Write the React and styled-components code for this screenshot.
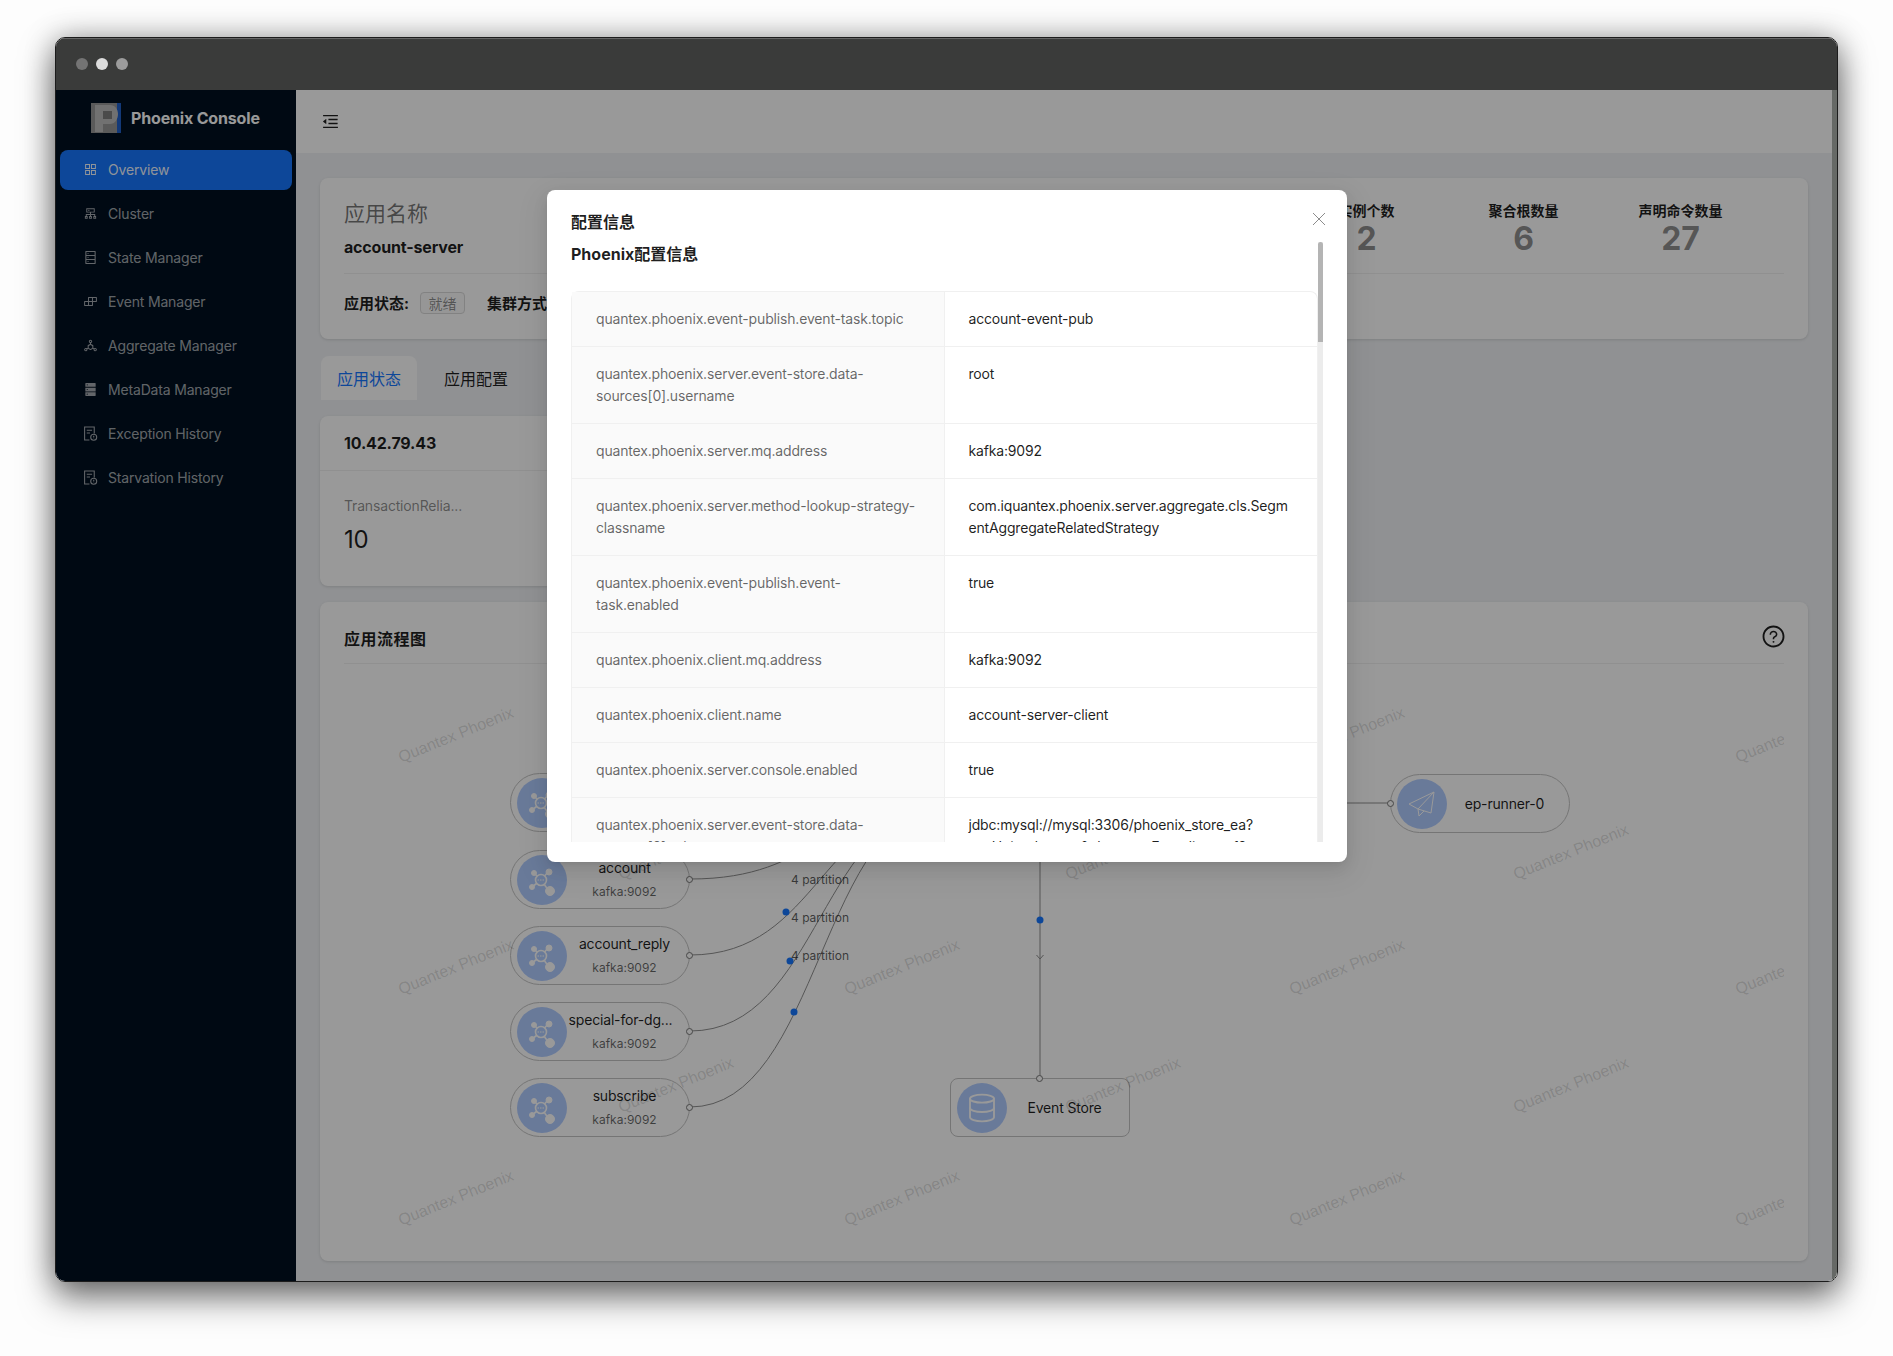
import React from 'react';
import styled, { createGlobalStyle } from 'styled-components';
import {
  AiOutlineAppstore,
  AiOutlineCluster,
  AiOutlineDatabase,
  AiOutlineBuild,
  AiOutlineDeploymentUnit,
  AiFillDatabase,
  AiOutlineMenuFold,
  AiOutlineQuestionCircle,
} from 'react-icons/ai';
import { Database } from 'lucide-react';

const GlobalStyle = createGlobalStyle`
  html, body {
    margin: 0;
    width: 1893px;
    height: 1356px;
    overflow: hidden;
    background: #fdfdfd;
    font-family: Inter, "Noto Sans CJK SC", sans-serif;
    letter-spacing: -0.17px;
    color: rgba(0, 0, 0, 0.88);
  }
  * {
    box-sizing: border-box;
  }
`;

const Page = styled.div`
  padding: 37px 55px 74px;
  height: 1356px;
`;

const Window = styled.div`
  height: 100%;
  display: flex;
  flex-direction: column;
  border-radius: 10px;
  overflow: hidden;
  border: 1px solid #1c1c1c;
  box-shadow: 0 16px 34px rgba(0, 0, 0, 0.5), 0 0 30px rgba(0, 0, 0, 0.3);
`;

const TitleBar = styled.div`
  height: 52px;
  flex-shrink: 0;
  display: flex;
  align-items: center;
  gap: 8px;
  padding: 0 0 2px 20px;
  background: #3a3b3a;
  border-top: 1px solid #666;
`;

const Light = styled.span`
  width: 12px;
  height: 12px;
  border-radius: 50%;
  background: ${(p) => p.$tone};
`;

const Body = styled.div`
  flex: 1;
  min-height: 0;
  display: flex;
  position: relative;
  background: #f0f2f5;
`;

const Sider = styled.aside`
  width: 240px;
  flex-shrink: 0;
  background: #000f20;
`;

const Brand = styled.div`
  height: 56px;
  margin-bottom: 4px;
  display: flex;
  align-items: center;
  gap: 10px;
  padding-left: 35px;
  color: #fff;
  font-size: 16px;
  font-weight: 700;
`;

const MenuList = styled.nav`
  display: flex;
  flex-direction: column;
  gap: 4px;
  padding: 0 4px;
`;

const MenuItem = styled.div`
  height: 40px;
  display: flex;
  align-items: center;
  gap: 10px;
  padding: 0 0 1px 23px;
  border-radius: 8px;
  font-size: 14px;
  color: ${(p) => (p.$active ? 'rgba(255,255,255,0.95)' : 'rgba(255,255,255,0.65)')};
  background: ${(p) => (p.$active ? '#1677ff' : 'transparent')};

  svg {
    width: 15px;
    height: 15px;
    flex-shrink: 0;
  }
`;

const Main = styled.main`
  flex: 1;
  min-width: 0;
  display: flex;
  flex-direction: column;
`;

const EdgeStrip = styled.div`
  width: 5px;
  flex-shrink: 0;
  background: #aab0aa;
`;

const Header = styled.header`
  height: 63px;
  flex-shrink: 0;
  display: flex;
  align-items: center;
  padding-left: 25px;
  background: #fff;
  font-size: 19px;
`;

const Content = styled.div`
  padding: 25px 24px 0;
`;

const Card = styled.section`
  background: #fff;
  border-radius: 8px;
  box-shadow: 0 1px 3px rgba(0, 0, 0, 0.12);
`;

const SummaryCard = styled(Card)`
  height: 161px;
  padding: 0 24px;
`;

const SummaryTop = styled.div`
  height: 96px;
  display: flex;
  justify-content: space-between;
  border-bottom: 1px solid #f0f0f0;
`;

const NameBlock = styled.div`
  padding-top: 20px;
`;

const AppLabel = styled.div`
  font-size: 21px;
  line-height: 32px;
  letter-spacing: 0;
  color: rgba(0, 0, 0, 0.55);
`;

const AppName = styled.div`
  margin-top: 5px;
  font-size: 16px;
  line-height: 24px;
  font-weight: 700;
`;

const Stats = styled.div`
  display: flex;
  padding: 22px 25px 0 0;
`;

const Stat = styled.div`
  width: 157px;
  text-align: center;
`;

const StatLabel = styled.div`
  font-size: 14px;
  line-height: 22px;
  letter-spacing: 0;
  font-weight: 700;
`;

const StatValue = styled.div`
  font-size: 32px;
  line-height: 34px;
  font-weight: 700;
  color: rgba(0, 0, 0, 0.45);
`;

const MetaRow = styled.div`
  margin-top: 18px;
  height: 21px;
  display: flex;
  align-items: center;
  font-size: 15px;
  letter-spacing: 0;
  font-weight: 700;
`;

const Tag = styled.span`
  width: 45px;
  height: 22px;
  margin: 0 22px 0 11px;
  display: flex;
  align-items: center;
  justify-content: center;
  font-size: 14px;
  font-weight: 400;
  color: rgba(0, 0, 0, 0.45);
  background: #fafafa;
  border: 1px solid #d9d9d9;
  border-radius: 4px;
`;

const Tabs = styled.div`
  margin: 17px 0 16px 1px;
  height: 44px;
  display: flex;
  gap: 11px;
`;

const Tab = styled.div`
  padding: 0 16px 1px;
  display: flex;
  align-items: center;
  font-size: 16px;
  letter-spacing: 0;
  border-radius: 8px 8px 0 0;
  color: ${(p) => (p.$active ? '#1677ff' : 'rgba(0,0,0,0.88)')};
  background: ${(p) => (p.$active ? '#fff' : 'transparent')};
`;

const InstanceCard = styled(Card)`
  width: 800px;
  height: 170px;
`;

const InstanceHead = styled.div`
  height: 55px;
  padding: 0 24px;
  display: flex;
  align-items: center;
  font-size: 16px;
  font-weight: 700;
  border-bottom: 1px solid #f0f0f0;
`;

const MetricBlock = styled.div`
  padding: 24px 24px 0;
`;

const MetricName = styled.div`
  font-size: 14px;
  line-height: 22px;
  color: rgba(0, 0, 0, 0.45);
`;

const MetricValue = styled.div`
  margin-top: 7px;
  font-size: 24px;
  line-height: 32px;
`;

const FlowCard = styled(Card)`
  margin-top: 16px;
  height: 659px;
  display: flex;
  flex-direction: column;
`;

const FlowHead = styled.div`
  height: 62px;
  margin: 0 24px;
  flex-shrink: 0;
  display: flex;
  align-items: center;
  justify-content: space-between;
  font-size: 16px;
  letter-spacing: 0.5px;
  font-weight: 700;
  border-bottom: 1px solid #f0f0f0;
  padding-top: 10px;

  svg {
    width: 25px;
    height: 25px;
    margin: -2px -2px 0 0;
  }
`;

const Canvas = styled.div`
  position: relative;
  flex: 1;
  margin: 0 24px;
  overflow: hidden;
`;

const EdgeLayer = styled.svg`
  position: absolute;
  inset: 0;
  width: 100%;
  height: 100%;
`;

const Node = styled.div`
  position: absolute;
  left: ${(p) => p.$x}px;
  top: ${(p) => p.$y}px;
  width: 180px;
  height: 59px;
  display: flex;
  align-items: center;
  padding-left: 6px;
  background: #fff;
  border: 1px solid #c4c4c4;
  border-radius: ${(p) => (p.$square ? '8px' : '30px')};
`;

const NodeIcon = styled.div`
  width: 50px;
  height: 50px;
  flex-shrink: 0;
  display: flex;
  align-items: center;
  justify-content: center;
  border-radius: 50%;
  background: #b0ccff;
  color: #fff;
`;

const NodeText = styled.div`
  width: 115px;
  text-align: center;
  white-space: nowrap;
`;

const NodeName = styled.div`
  font-size: 14px;
  line-height: 23px;
  margin-right: ${(p) => (p.$nudged ? '8px' : '0')};
`;

const NodeSub = styled.div`
  font-size: 12px;
  line-height: 25px;
  letter-spacing: 0;
  color: rgba(0, 0, 0, 0.6);
`;

const Handle = styled.span`
  position: absolute;
  width: 7px;
  height: 7px;
  border-radius: 50%;
  background: #fff;
  border: 1px solid #777;
  ${(p) => p.$side === 'right' && 'right: -4px; top: 25px;'}
  ${(p) => p.$side === 'left' && 'left: -4px; top: 25px;'}
  ${(p) => p.$side === 'top' && 'left: 85px; top: -4px;'}
`;

const EdgeLabel = styled.div`
  position: absolute;
  left: ${(p) => p.$x}px;
  top: ${(p) => p.$y}px;
  transform: translate(-50%, -50%);
  font-size: 12px;
  letter-spacing: 0;
  white-space: nowrap;
  color: rgba(0, 0, 0, 0.65);
`;

const Watermark = styled.div`
  position: absolute;
  left: ${(p) => p.$x}px;
  top: ${(p) => p.$y}px;
  transform: translate(-50%, -50%) rotate(-22deg);
  font-family: "Liberation Sans", sans-serif;
  font-size: 16px;
  letter-spacing: 0;
  white-space: nowrap;
  color: rgba(0, 0, 0, 0.14);
  pointer-events: none;
`;

const Mask = styled.div`
  position: absolute;
  inset: 0;
  background: rgba(0, 0, 0, 0.4);
`;

const Modal = styled.div`
  position: absolute;
  left: 491px;
  top: 100px;
  width: 800px;
  height: 672px;
  padding: 20px 24px;
  display: flex;
  flex-direction: column;
  background: #fff;
  border-radius: 8px;
  box-shadow: 0 6px 16px rgba(0, 0, 0, 0.08), 0 3px 6px -4px rgba(0, 0, 0, 0.12),
    0 9px 28px 8px rgba(0, 0, 0, 0.05);
`;

const ModalTitle = styled.div`
  font-size: 16px;
  line-height: 24px;
  letter-spacing: 0;
  font-weight: 700;
  height: 32px;
  flex-shrink: 0;
`;

const CloseButton = styled.div`
  position: absolute;
  right: 21px;
  top: 20px;
  width: 14px;
  height: 14px;
  color: #8c8c8c;
`;

const ModalScroll = styled.div`
  position: relative;
  height: 600px;
  flex-shrink: 0;
  overflow: hidden;
`;

const ScrollTrack = styled.div`
  position: absolute;
  right: 0;
  top: 0;
  bottom: 0;
  width: 5px;
  background: #ececec;
`;

const ScrollThumb = styled.div`
  height: 100px;
  background: #b4b4b4;
  border-radius: 3px 3px 0 0;
`;

const SectionTitle = styled.div`
  font-size: 16px;
  line-height: 24px;
  letter-spacing: 0;
  font-weight: 700;
  margin-bottom: 25px;
`;

const ConfigTable = styled.table`
  width: 747px;
  table-layout: fixed;
  border-collapse: separate;
  border-spacing: 0;
  border: 1px solid #f0f0f0;
  border-bottom: 0;
  border-radius: 8px 8px 0 0;
  font-size: 14px;
  line-height: 22px;

  td {
    padding: 16px 24px;
    vertical-align: top;
    border-bottom: 1px solid #f0f0f0;
    overflow-wrap: anywhere;
  }
`;

const KeyCell = styled.td`
  color: rgba(0, 0, 0, 0.6);
  background: #fafafa;
  border-right: 1px solid #f0f0f0;
`;

const ValueCell = styled.td`
  color: rgba(0, 0, 0, 0.88);
`;

const menu = [
  { label: 'Overview', icon: <AiOutlineAppstore />, active: true },
  { label: 'Cluster', icon: <AiOutlineCluster /> },
  { label: 'State Manager', icon: <AiOutlineDatabase /> },
  { label: 'Event Manager', icon: <AiOutlineBuild /> },
  { label: 'Aggregate Manager', icon: <AiOutlineDeploymentUnit /> },
  { label: 'MetaData Manager', icon: <AiFillDatabase /> },
  { label: 'Exception History', icon: <HistoryIcon /> },
  { label: 'Starvation History', icon: <HistoryIcon /> },
];

const config = [
  ['quantex.phoenix.event-publish.event-task.topic', 'account-event-pub'],
  ['quantex.phoenix.server.event-store.data-sources[0].username', 'root'],
  ['quantex.phoenix.server.mq.address', 'kafka:9092'],
  ['quantex.phoenix.server.method-lookup-strategy-classname', 'com.iquantex.phoenix.server.aggregate.cls.SegmentAggregateRelatedStrategy'],
  ['quantex.phoenix.event-publish.event-task.enabled', 'true'],
  ['quantex.phoenix.client.mq.address', 'kafka:9092'],
  ['quantex.phoenix.client.name', 'account-server-client'],
  ['quantex.phoenix.server.console.enabled', 'true'],
  ['quantex.phoenix.server.event-store.data-sources[0].url', 'jdbc:mysql://mysql:3306/phoenix_store_ea?useUnicode=true&characterEncoding=utf8'],
];

const topics = [
  { name: 'account-event', y: 109 },
  { name: 'account', y: 186 },
  { name: 'account_reply', y: 262 },
  { name: 'special-for-dg...', y: 338, nudged: true },
  { name: 'subscribe', y: 414 },
];

const watermarks = [
  [112, 71], [558, 71], [1003, 71], [1449, 71],
  [112, 303], [558, 303], [1003, 303], [1449, 303],
  [112, 534], [558, 534], [1003, 534], [1449, 534],
  [332, 188], [779, 188], [1227, 188],
  [332, 421], [779, 421], [1227, 421],
];

function HistoryIcon() {
  return (
    <svg viewBox="0 0 14 14" fill="none" stroke="currentColor" strokeWidth="1">
      <path d="M6 13H1.500V1h9v6" />
      <path d="M3.500 4h5M3.500 6.500h3" />
      <circle cx="10" cy="10.500" r="2.800" />
      <path d="M10 9v1.800M10 11.600v.4" />
    </svg>
  );
}

function CloseIcon() {
  return (
    <svg width="14" height="14" viewBox="0 0 14 14" fill="none" stroke="currentColor" strokeWidth="1">
      <path d="M1 1l12 12M13 1L1 13" />
    </svg>
  );
}

function Logo() {
  return (
    <svg width="30" height="30" viewBox="0 0 30 30">
      <rect width="30" height="30" fill="#969696" />
      <rect x="26" width="4" height="30" fill="#2060c8" />
      <path d="M4 2h15c5 0 8 4 8 9s-3 10-8 10h-7v8H4z" fill="#bcbcbc" />
      <rect x="12" y="8" width="9" height="8" fill="#7d7d7d" />
    </svg>
  );
}

function TopicIcon() {
  return (
    <svg width="32" height="32" viewBox="0 0 32 32" fill="#fff" stroke="#fff">
      <path d="M15 16L8 9M15 16L22 8M15 16L6 23M15 16L23 27" strokeWidth="1.600" />
      <circle cx="8" cy="9" r="2.500" />
      <circle cx="23" cy="8" r="3" />
      <circle cx="6" cy="23" r="2.500" />
      <circle cx="24" cy="27" r="4.500" />
      <circle cx="15" cy="16" r="5.500" fill="#b0ccff" strokeWidth="1.600" />
      <path d="M11.500 16h7" strokeWidth="1.200" strokeDasharray="1.500 1" />
    </svg>
  );
}

function PlaneIcon() {
  return (
    <svg width="30" height="30" viewBox="0 0 30 30" fill="none" stroke="#fff" strokeWidth="1">
      <path d="M27 3L2 15l9 5 13 4zM27 3L11 20l1 7 5-5" />
    </svg>
  );
}

function curve(y) {
  return `M346 ${y}C476.500 ${y} 476.500 139 607 139`;
}

function FlowDiagram() {
  return (
    <Canvas>
      <EdgeLayer>
        <g fill="none" stroke="#8f8f8f" strokeWidth="1">
          {topics.map((t) => (
            <path key={t.name} d={curve(t.y + 29)} />
          ))}
          <path d="M696 169V414" />
          <path d="M786 139H1046" />
          <path d="M692.500 291l3.500 4 3.500-4" />
        </g>
        <g fill="#1677ff">
          <circle cx="442" cy="248" r="3.500" />
          <circle cx="446" cy="297" r="3.500" />
          <circle cx="450" cy="348" r="3.500" />
          <circle cx="696" cy="256" r="3.500" />
        </g>
      </EdgeLayer>

      {topics.map((t) => (
        <Node key={t.name} $x={166} $y={t.y}>
          <NodeIcon><TopicIcon /></NodeIcon>
          <NodeText>
            <NodeName $nudged={t.nudged}>{t.name}</NodeName>
            <NodeSub>kafka:9092</NodeSub>
          </NodeText>
          <Handle $side="right" />
        </Node>
      ))}

      <Node $x={606} $y={414} $square>
        <NodeIcon><Database size={32} strokeWidth={1.4} /></NodeIcon>
        <NodeText><NodeName>Event Store</NodeName></NodeText>
        <Handle $side="top" />
      </Node>

      <Node $x={1046} $y={110}>
        <NodeIcon><PlaneIcon /></NodeIcon>
        <NodeText><NodeName>ep-runner-0</NodeName></NodeText>
        <Handle $side="left" />
      </Node>

      <EdgeLabel $x={476} $y={215}>4 partition</EdgeLabel>
      <EdgeLabel $x={476} $y={253}>4 partition</EdgeLabel>
      <EdgeLabel $x={476} $y={291}>4 partition</EdgeLabel>

      {watermarks.map(([x, y]) => (
        <Watermark key={`${x}-${y}`} $x={x} $y={y}>Quantex Phoenix</Watermark>
      ))}
    </Canvas>
  );
}

export default function App() {
  return (
    <Page>
      <GlobalStyle />
      <Window>
        <TitleBar>
          <Light $tone="#747474" />
          <Light $tone="#dcdcdc" />
          <Light $tone="#9c9c9c" />
        </TitleBar>
        <Body>
          <Sider>
            <Brand><Logo />Phoenix Console</Brand>
            <MenuList>
              {menu.map((item) => (
                <MenuItem key={item.label} $active={item.active}>
                  {item.icon}
                  {item.label}
                </MenuItem>
              ))}
            </MenuList>
          </Sider>

          <Main>
            <Header><AiOutlineMenuFold /></Header>
            <Content>
              <SummaryCard>
                <SummaryTop>
                  <NameBlock>
                    <AppLabel>应用名称</AppLabel>
                    <AppName>account-server</AppName>
                  </NameBlock>
                  <Stats>
                    <Stat><StatLabel>实例个数</StatLabel><StatValue>2</StatValue></Stat>
                    <Stat><StatLabel>聚合根数量</StatLabel><StatValue>6</StatValue></Stat>
                    <Stat><StatLabel>声明命令数量</StatLabel><StatValue>27</StatValue></Stat>
                  </Stats>
                </SummaryTop>
                <MetaRow>
                  应用状态:<Tag>就绪</Tag>集群方式
                </MetaRow>
              </SummaryCard>

              <Tabs>
                <Tab $active>应用状态</Tab>
                <Tab>应用配置</Tab>
              </Tabs>

              <InstanceCard>
                <InstanceHead>10.42.79.43</InstanceHead>
                <MetricBlock>
                  <MetricName>TransactionRelia...</MetricName>
                  <MetricValue>10</MetricValue>
                </MetricBlock>
              </InstanceCard>

              <FlowCard>
                <FlowHead>
                  应用流程图
                  <AiOutlineQuestionCircle />
                </FlowHead>
                <FlowDiagram />
              </FlowCard>
            </Content>
          </Main>
          <EdgeStrip />

          <Mask />

          <Modal>
            <ModalTitle>配置信息</ModalTitle>
            <CloseButton><CloseIcon /></CloseButton>
            <ModalScroll>
              <SectionTitle>Phoenix配置信息</SectionTitle>
              <ConfigTable>
                <tbody>
                  {config.map(([key, value]) => (
                    <tr key={key}>
                      <KeyCell>{key}</KeyCell>
                      <ValueCell>{value}</ValueCell>
                    </tr>
                  ))}
                </tbody>
              </ConfigTable>
              <ScrollTrack><ScrollThumb /></ScrollTrack>
            </ModalScroll>
          </Modal>
        </Body>
      </Window>
    </Page>
  );
}
